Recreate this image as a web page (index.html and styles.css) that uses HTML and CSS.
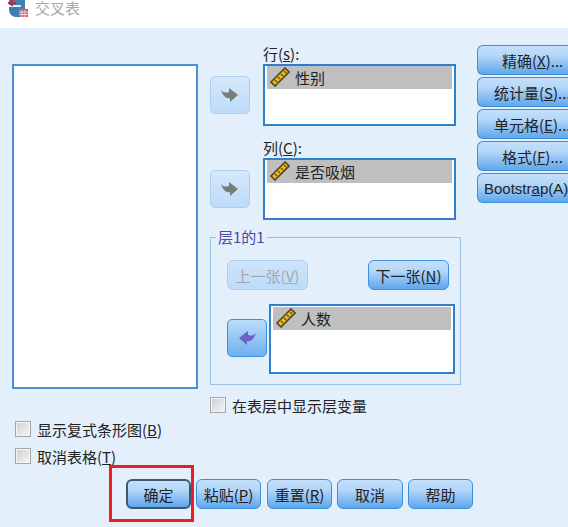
FILE: index.html
```html
<!DOCTYPE html>
<html>
<head>
	<meta charset="utf-8">
	<title>交叉表</title>
	<link rel="stylesheet" href="styles.css">
</head>
<body>
	<svg class="defs" width="0" height="0">
		<symbol id="ruler" viewBox="0 0 20 20">
			<path d="M1 15 L15 1 L19 5 L5 19 Z" fill="#f2b91d" stroke="#4a4a2a" stroke-width="1.6"/>
			<path d="M5 13 L7 15 M8 10 L10 12 M11 7 L13 9 M14 4 L16 6" stroke="#6b5a10" stroke-width="1.6"/>
		</symbol>
		<symbol id="arrow_right" viewBox="0 0 20 16">
			<path d="M1 3 C4 6 6 6 9 5 L9 1 L18 8 L10 15 L10 11 C6 12 3 9 1 3 Z"/>
		</symbol>
	</svg>

	<div class="titlebar">
		<svg class="app_icon" width="21" height="18" viewBox="0 0 21 18">
			<path d="M1 0 H17 V9 H20 V17 H7 A8 8 0 0 1 1 10 Z" fill="#3f7fb0"/>
			<rect x="1" y="5" width="12" height="2" fill="#dfeaf2"/>
			<rect x="3" y="0" width="2" height="6" fill="#d3203c"/>
			<rect x="0" y="2" width="8" height="2" fill="#d3203c"/>
			<rect x="11" y="9" width="9" height="8" fill="#d2566f"/>
			<path d="M11 12 H20 M11 14.500 H20 M14 10 V17 M17 10 V17" stroke="#f4d4da" stroke-width="1"/>
		</svg>
		<span>交叉表</span>
	</div>

	<div class="dialog">
		<div class="top">
			<div class="list source_list"></div>

			<div class="middle">
				<div class="var_row">
					<button class="arrow_btn off"><svg width="20" height="16"><use href="#arrow_right"/></svg></button>
					<div class="var_box">
						<div class="var_label">行(<u>s</u>):</div>
						<div class="list var_list">
							<div class="item"><svg width="20" height="20"><use href="#ruler"/></svg>性别</div>
						</div>
					</div>
				</div>
				<div class="var_row">
					<button class="arrow_btn off"><svg width="20" height="16"><use href="#arrow_right"/></svg></button>
					<div class="var_box">
						<div class="var_label">列(<u>C</u>):</div>
						<div class="list var_list">
							<div class="item"><svg width="20" height="20"><use href="#ruler"/></svg>是否吸烟</div>
						</div>
					</div>
				</div>

				<fieldset class="layer">
					<legend>层1的1</legend>
					<div class="layer_nav">
						<button class="btn nav_btn" disabled>上一张(<u>V</u>)</button>
						<button class="btn nav_btn">下一张(<u>N</u>)</button>
					</div>
					<div class="layer_var">
						<button class="arrow_btn on"><svg class="flip" width="20" height="16"><use href="#arrow_right"/></svg></button>
						<div class="list layer_list">
							<div class="item"><svg width="20" height="20"><use href="#ruler"/></svg>人数</div>
						</div>
					</div>
				</fieldset>
			</div>

			<div class="side">
				<button class="btn side_btn">精确(<u>X</u>)...</button>
				<button class="btn side_btn">统计量(<u>S</u>)...</button>
				<button class="btn side_btn">单元格(<u>E</u>)...</button>
				<button class="btn side_btn">格式(<u>F</u>)...</button>
				<button class="btn side_btn boot">Bootstr<u>a</u>p(A)...</button>
			</div>
		</div>

		<label class="check layer_check"><span class="box"></span>在表层中显示层变量</label>
		<label class="check first_check"><span class="box"></span>显示复式条形图(<u>B</u>)</label>
		<label class="check second_check"><span class="box"></span>取消表格(<u>T</u>)</label>

		<div class="actions">
			<button class="btn act_btn default_btn">确定</button>
			<button class="btn act_btn">粘贴(<u>P</u>)</button>
			<button class="btn act_btn reset_btn">重置(<u>R</u>)</button>
			<button class="btn act_btn cancel_btn">取消</button>
			<button class="btn act_btn help_btn">帮助</button>
		</div>

		<div class="red_mark"></div>
	</div>
</body>
</html>
```

FILE: styles.css
```css
html, body {
	margin: 0;
	height: 100%;
	overflow: hidden;
}

body {
	position: relative;
	width: 568px;
	height: 527px;
	background-color: #E3EFFB;
	font-family: "Noto Sans CJK SC", "Liberation Sans", sans-serif;
	font-size: 15px;
	color: #222;
}

u {
	text-decoration: underline;
}

.defs {
	position: absolute;
}

.titlebar {
	height: 28px;
	background-color: #fff;
	display: flex;
	align-items: flex-start;
	color: #a8a8a8;
}

.app_icon {
	margin-left: 8px;
	flex: none;
}

.titlebar span {
	margin-left: 6px;
	line-height: 16px;
}

.dialog {
	padding: 17px 0 0 0;
}

.top {
	display: flex;
	height: 344px;
	padding-left: 12px;
}

.top > * {
	flex: none;
}

.list {
	box-sizing: border-box;
	background-color: #fff;
	border: 2px solid #2f7fcf;
}

.source_list {
	width: 186px;
	height: 325px;
	margin-top: 19px;
	border-color: #4a90d6;
}

.middle {
	margin-left: 12px;
	width: 251px;
	display: flex;
	flex-direction: column;
}

.var_row {
	display: flex;
	height: 94px;
	flex: none;
}

.var_box {
	margin-left: 13px;
}

.var_label {
	height: 19px;
	line-height: 18px;
}

.var_list {
	width: 193px;
	height: 62px;
	padding: 0 2px;
}

.item {
	height: 23px;
	background-color: #bfbfbf;
	display: flex;
	align-items: center;
	line-height: 23px;
	color: #222;
}

.item svg {
	margin: -1px 5px 0 3px;
}

.arrow_btn {
	box-sizing: border-box;
	flex: none;
	width: 40px;
	height: 38px;
	padding: 0;
	border-radius: 5px;
	display: flex;
	align-items: center;
	justify-content: center;
}

.var_row .arrow_btn {
	margin-top: 31px;
}

.arrow_btn.off {
	border: 1px solid #a9d0f3;
	background: linear-gradient(#d6e8fa, #bcdcf9);
	fill: #7b7b7b;
}

.arrow_btn.on {
	border: 1px solid #3b8fe0;
	background: linear-gradient(#bcdcfb, #6fb0ee);
	fill: #6a62c8;
	margin-top: -2px;
}

.flip {
	transform: scaleX(-1);
}

.layer {
	box-sizing: border-box;
	flex: none;
	width: 251px;
	height: 157px;
	margin: -5px 0 0 0;
	padding: 14px 11px 0 16px;
	border: 1px solid #9cc0e3;
	min-width: 0;
}

.layer legend {
	padding: 0 2px;
	margin-left: -11px;
	color: #4a4aa8;
	line-height: 18px;
}

.layer_nav {
	display: flex;
	justify-content: space-between;
	width: 222px;
}

.layer_var {
	display: flex;
	align-items: center;
	margin-top: 14px;
}

.layer_list {
	flex: none;
	width: 186px;
	height: 70px;
	margin-left: 2px;
	padding: 1px 2px;
}

.btn {
	box-sizing: border-box;
	height: 30px;
	padding: 0;
	border: 1px solid #3b8fe0;
	border-radius: 6px;
	background: linear-gradient(#c4e0fc, #b4d6f8 35%, #5ea6ec);
	font-family: inherit;
	font-size: 15px;
	color: #222;
	white-space: nowrap;
}

.nav_btn {
	width: 81px;
}

.btn:disabled {
	background: linear-gradient(#cfe4f9, #bcdcf9);
	border-color: #a9d0f3;
	color: #a2a8ae;
}

.side {
	margin-left: 16px;
	display: flex;
	flex-direction: column;
	gap: 2px;
}

.side_btn {
	width: 100px;
	border-right: 0;
	border-radius: 6px 0 0 6px;
	text-align: left;
	padding-left: 24px;
}

.side_btn:nth-child(2), .side_btn:nth-child(3) {
	padding-left: 16px;
}

.side_btn.boot {
	padding-left: 6px;
	font-family: "Liberation Sans", sans-serif;
}

.check {
	display: flex;
	align-items: center;
	height: 18px;
	margin-left: 15px;
}

.box {
	box-sizing: border-box;
	flex: none;
	width: 16px;
	height: 16px;
	margin-right: 6px;
	border: 1px solid #a6a6a6;
	background: linear-gradient(135deg, #cfcfcf, #f6f6f6);
	box-shadow: inset 0 0 0 1px #f4f4f4;
}

.layer_check {
	margin: 7px 0 0 210px;
}

.first_check {
	margin-top: 6px;
}

.second_check {
	margin-top: 9px;
}

.actions {
	display: flex;
	margin: 14px 0 0 126px;
}

.act_btn {
	width: 65px;
	margin-right: 5px;
	flex: none;
}

.default_btn {
	border-color: #3a5870;
	border-width: 2px;
}

.reset_btn {
	margin-left: 1px;
}

.cancel_btn {
	width: 66px;
}

.red_mark {
	position: absolute;
	left: 109px;
	top: 465px;
	width: 79px;
	height: 51px;
	border: 3px solid #ee1c25;
}
```
